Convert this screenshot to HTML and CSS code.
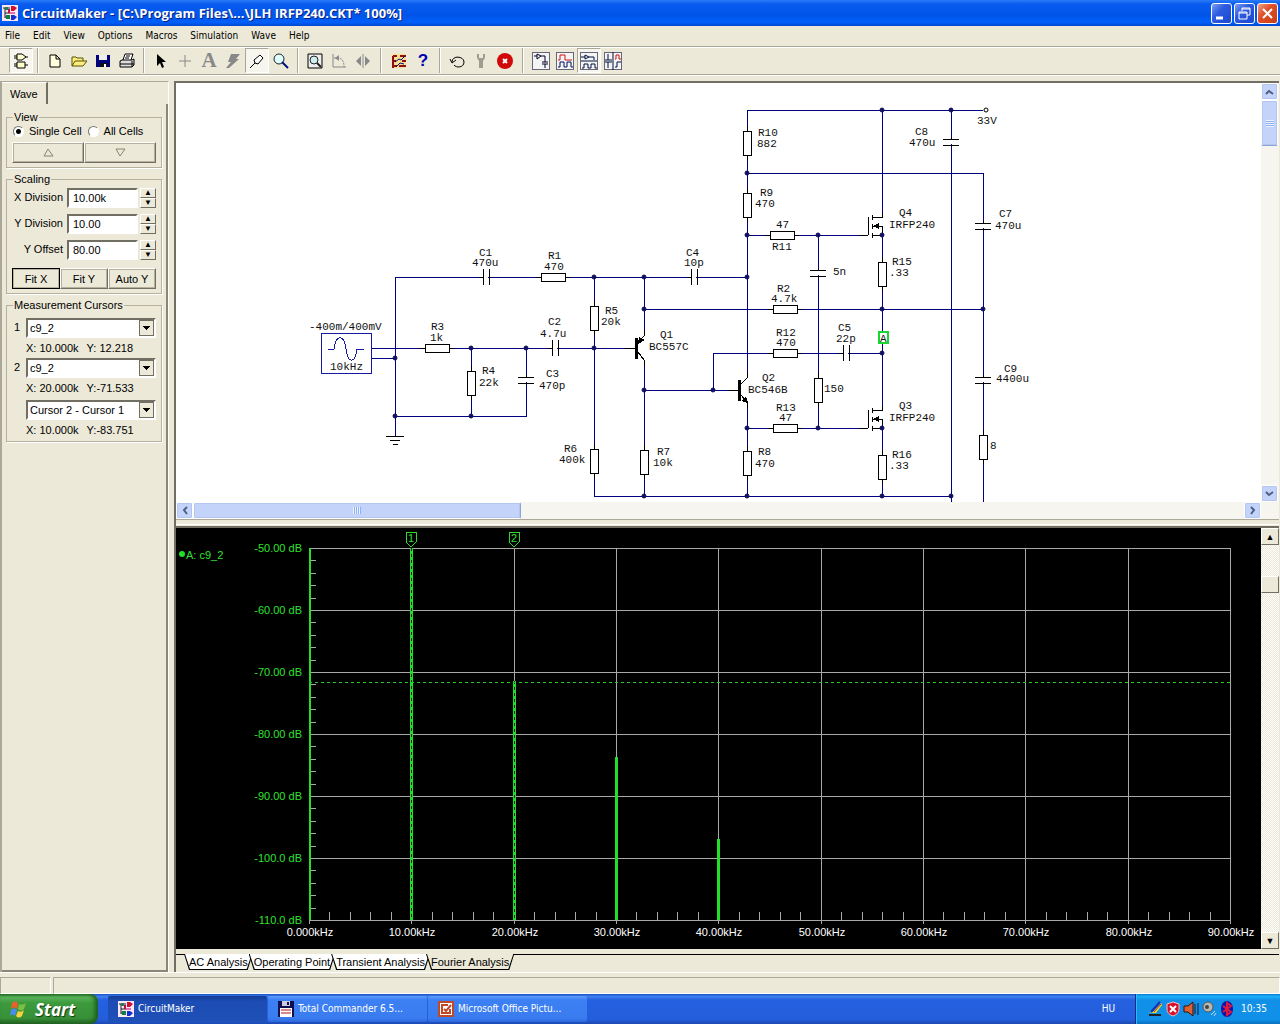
FILE: index.html
```html
<!DOCTYPE html>
<html lang="en">
<head>
    <meta charset="UTF-8">
    <meta name="viewport" content="width=device-width, initial-scale=1.0">
    <title>CircuitMaker</title>
    <link rel="stylesheet" href="styles.css">
</head>
<body>

<!-- shared symbols -->
<svg class="defs" width="0" height="0">
    <symbol id="logo" viewBox="0 0 16 16">
        <rect width="16" height="16" fill="#fbe8f4"/>
        <path d="M1 3h7M3 3v10M3 8h6M8 12H3" stroke="#223" fill="none"/>
        <path d="M3 2h3v3H3z" fill="#208050"/>
        <path d="M9 1h3l3 2-3 3H9z" fill="#d01030"/>
        <path d="M8 7h5v2H8z" fill="#e070b0"/>
        <path d="M9 10h3l3 2-3 3H9z" fill="#1030d0"/>
        <path d="M4 10h4v4H4z" fill="#108040"/>
        <path d="M6 4h2v4H6z" fill="#c01040"/>
    </symbol>
    <g id="resH"><path class="lead" d="M-17 0H17"/><rect class="part" x="-12" y="-4" width="24" height="8"/></g>
    <g id="resV"><path class="lead" d="M0 -17V17"/><rect class="part" x="-4" y="-12" width="8" height="24"/></g>
    <g id="capH"><path class="gap" d="M-2 0H2"/><path class="lead" d="M-7 0H-3M3 0H5M-3 -8V8M3 -8V8"/></g>
    <g id="capV"><path class="gap" d="M0 -2V2"/><path class="lead" d="M0 -5V-3M0 3V5M-8 -3H8M-8 3H8"/></g>
    <g id="mosfet">
        <path class="lead" d="M-22 0H-14M-14 0V-18M-10 -20V-15M-10 -11V-6M-10 -2V3M-10 -18H0V-22M-10 -9H0V0H-10"/>
        <path d="M-9 -9L-3 -12V-6z" fill="#000"/>
    </g>
</svg>

<header class="titlebar">
    <svg class="logo"><use href="#logo"/></svg>
    <h1>CircuitMaker - [C:\Program Files\...\JLH IRFP240.CKT* 100%]</h1>
    <button class="win-btn" aria-label="Minimize"><svg width="19" height="19"><path d="M4 14h7" stroke="#fff" stroke-width="3"/></svg></button>
    <button class="win-btn" aria-label="Restore"><svg width="19" height="19" fill="none" stroke="#fff"><path d="M7 7V4h8v7h-3M7 5h8"/><path d="M4 8h8v7H4zM4 9h8"/></svg></button>
    <button class="win-btn close" aria-label="Close"><svg width="19" height="19"><path d="M5 5l9 9M14 5l-9 9" stroke="#fff" stroke-width="2"/></svg></button>
</header>

<nav class="menu">
    <a href="#">File</a><a href="#">Edit</a><a href="#">View</a><a href="#">Options</a><a href="#">Macros</a><a href="#">Simulation</a><a href="#">Wave</a><a href="#">Help</a>
</nav>

<div class="toolbar">
    <button class="tool on" aria-label="Parts"><svg viewBox="0 0 16 16"><path d="M4 1h5l4 3-4 3H4zM1 3h3M1 5h3M13 4h2M4 9h8v6H4zM1 11h3M1 13h3M12 12h3" fill="#ffc" stroke="#000"/></svg></button>
    <span class="sep"></span>
    <button class="tool" aria-label="New"><svg viewBox="0 0 16 16"><path d="M3 2h6l4 4v8H3zM9 2v4h4" fill="#ffd" stroke="#000"/></svg></button>
    <button class="tool" aria-label="Open"><svg viewBox="0 0 16 16"><path d="M1 13V4h4l1 1h6v3M1 13l3-5h12l-4 5z" fill="#ffec80" stroke="#550"/></svg></button>
    <button class="tool" aria-label="Save"><svg viewBox="0 0 16 16"><path d="M1 2h14v12H1z" fill="#00007a"/><path d="M4 2h8v5H4z" fill="#eee"/><path d="M5 10h7v4H5z" fill="#111"/><path d="M9 11h2v3H9z" fill="#fff"/></svg></button>
    <button class="tool" aria-label="Print"><svg viewBox="0 0 16 16"><path d="M4 7l2-6h8l-2 6" fill="#fff" stroke="#000"/><path d="M1 8l2-1h10l2-1v6l-2 2H1z" fill="#ddd" stroke="#000"/><path d="M7 3h4M6 5h4M1 11h14M13 8v6" stroke="#000"/></svg></button>
    <span class="sep"></span>
    <button class="tool" aria-label="Select"><svg viewBox="0 0 16 16"><path d="M4 1v12l3-3 2 5 2-1-2-5h4z" fill="#000"/></svg></button>
    <button class="tool" aria-label="Wire"><svg viewBox="0 0 16 16"><path d="M8 2v12M2 8h12" stroke="#888"/></svg></button>
    <button class="tool icon-a">A</button>
    <button class="tool" aria-label="Delete"><svg viewBox="0 0 16 16"><path d="M6 1h9l-4 5h3L4 15H1l5-6H3z" fill="#888"/></svg></button>
    <button class="tool on" aria-label="Probe"><svg viewBox="0 0 16 16"><path d="M1 15l5-5M6 10L5 7l6-5 3 3-5 6z" fill="#fff" stroke="#000"/></svg></button>
    <button class="tool" aria-label="Zoom"><svg viewBox="0 0 16 16"><circle cx="6" cy="6" r="5" fill="#dff" stroke="#222"/><path d="M9 9l6 6" stroke="#001080" stroke-width="2"/></svg></button>
    <span class="sep"></span>
    <button class="tool" aria-label="Fit"><svg viewBox="0 0 16 16"><path d="M1 1h14v14H1z" fill="#eee" stroke="#000"/><circle cx="7" cy="7" r="4" fill="#cee" stroke="#222"/><path d="M10 10l4 4" stroke="#222" stroke-width="2"/></svg></button>
    <button class="tool" aria-label="Rotate"><svg viewBox="0 0 16 16"><path d="M2 1v13h13" fill="none" stroke="#888"/><path d="M3 5h4c4 0 6 3 6 9" fill="none" stroke="#888" stroke-dasharray="2 1"/><path d="M8 2v6L4 5z" fill="#888"/></svg></button>
    <button class="tool" aria-label="Mirror"><svg viewBox="0 0 16 16"><path d="M6 3v10L1 8zM10 3v10l5-5z" fill="#888"/><path d="M8 1v14" stroke="#888"/></svg></button>
    <span class="sep wide"></span>
    <button class="tool" aria-label="Analyses"><svg viewBox="0 0 16 16"><path d="M1 1h14v14H1z" fill="#f8e090"/><path d="M2 3h4M2 3v12M2 8h3M2 13h4M9 3h6M11 8h4M8 13h7" fill="none" stroke="#901010" stroke-width="2"/><path d="M4 9l4-3 2 1 4-4M5 14l4-4 4 1" fill="none" stroke="#001080"/></svg></button>
    <button class="tool icon-q">?</button>
    <span class="sep"></span>
    <button class="tool" aria-label="Reset"><svg viewBox="0 0 16 16"><path d="M3 9c0-7 12-6 12 0 0 6-8 6-10 3M1 6l2 4 4-3" fill="none" stroke="#000"/></svg></button>
    <button class="tool" aria-label="Step"><svg viewBox="0 0 16 16"><path d="M4 1v4l2 3v7h4V8l2-3V1h-2v4H6V1z" fill="#a09c90"/></svg></button>
    <button class="tool" aria-label="Stop"><svg viewBox="0 0 16 16"><circle cx="8" cy="8" r="8" fill="#d00808"/><path d="M6 6l4 4M10 6l-4 4" stroke="#fff" stroke-width="2"/></svg></button>
    <span class="sep wide"></span>
    <button class="tool scope" aria-label="Schematic"><svg viewBox="0 0 18 18"><path class="frame" d="M0 0h18v18H0z"/><path d="M2 4h3M5 2v5l4-3zM9 4h4v6M10 10h6M10 12h6M13 12v4" fill="none" stroke="#002"/></svg></button>
    <button class="tool scope" aria-label="Waveforms"><svg viewBox="0 0 18 18"><path class="frame" d="M0 0h18v18H0z"/><path d="M2 8h2V3h5v5h7" fill="none" stroke="#d01010"/><path d="M2 15h2v-5h4v5h3v-5h4v5h2" fill="none" stroke="#001060"/></svg></button>
    <button class="tool scope on" aria-label="Split horizontal"><svg viewBox="0 0 18 18"><path class="frame" d="M0 0h18v18H0z"/><path d="M1 5h4M5 3v4l4-2zM9 5h5v3M1 9h16M2 16h2v-4h4v4h3v-4h4v4h2" fill="none" stroke="#001040"/></svg></button>
    <button class="tool scope" aria-label="Split vertical"><svg viewBox="0 0 18 18"><path class="frame" d="M0 0h18v18H0z"/><path d="M9 0v18M4 2v6M1 8h7M1 10h7M4 10v6M11 15h2v-5h4" fill="none" stroke="#001040"/><path d="M11 7h1V3h3v4h2" fill="none" stroke="#d01010"/></svg></button>
</div>

<main class="work">
    <aside class="side">
        <div class="side-tab">Wave</div>
        <div class="side-page">
            <fieldset class="group view">
                <legend>View</legend>
                <div class="radios">
                    <label><input type="radio" name="cell" checked>Single Cell</label>
                    <label><input type="radio" name="cell">All Cells</label>
                </div>
                <div class="buttons">
                    <button class="btn" aria-label="Up"><svg width="11" height="9"><path d="M1 8h9L5 1z" fill="none" stroke="#888470"/></svg></button>
                    <button class="btn" aria-label="Down"><svg width="11" height="9"><path d="M1 1h9L5 8z" fill="none" stroke="#888470"/></svg></button>
                </div>
            </fieldset>

            <fieldset class="group">
                <legend>Scaling</legend>
                <div class="field">
                    <label for="xdiv">X Division</label><input type="text" id="xdiv" value="10.00k">
                    <span class="spin"><button aria-label="More">▲</button><button aria-label="Less">▼</button></span>
                </div>
                <div class="field">
                    <label for="ydiv">Y Division</label><input type="text" id="ydiv" value="10.00">
                    <span class="spin"><button aria-label="More">▲</button><button aria-label="Less">▼</button></span>
                </div>
                <div class="field">
                    <label for="yoff">Y Offset</label><input type="text" id="yoff" value="80.00">
                    <span class="spin"><button aria-label="More">▲</button><button aria-label="Less">▼</button></span>
                </div>
                <div class="buttons">
                    <button class="btn default">Fit X</button>
                    <button class="btn">Fit Y</button>
                    <button class="btn">Auto Y</button>
                </div>
            </fieldset>

            <fieldset class="group cursors">
                <legend>Measurement Cursors</legend>
                <div class="pick"><label for="cur1">1</label><select id="cur1"><option>c9_2</option></select></div>
                <p><span>X: 10.000k</span><span>Y: 12.218</span></p>
                <div class="pick"><label for="cur2">2</label><select id="cur2"><option>c9_2</option></select></div>
                <p><span>X: 20.000k</span><span>Y:-71.533</span></p>
                <div class="pick diff"><select aria-label="Difference"><option>Cursor 2 - Cursor 1</option></select></div>
                <p><span>X: 10.000k</span><span>Y:-83.751</span></p>
            </fieldset>
        </div>
    </aside>

    <section class="panes">
        <div class="schematic">
            <div class="sheet-row">
                <svg class="sheet">
                    <g transform="translate(-176 -83)">
                        <!-- wires -->
                        <path class="wire" d="M395 436V277H747M371 348H636M371 358H395M395 416H526V348M471 348V416
                            M594 277V496H951M644 277V336M644 360V496M644 309H983M644 390H739M713 390V353H882
                            M747 378V110H983M747 402V496M747 428H862M747 173H983V510M747 235H862
                            M818 235V428M882 110V214M882 235V406M882 428V496M951 110V510"/>
                        <!-- signal generator -->
                        <rect class="gen" x="321" y="333" width="50" height="40"/>
                        <path class="gen" d="M328 349H334C336 334 344 334 346 349C348 364 355 364 357 349H364"/>
                        <path class="lead" d="M386 436H404M390 440H400M393 444H398"/>
                        <!-- resistors -->
                        <use href="#resH" x="437" y="348"/><use href="#resH" x="553" y="277"/>
                        <use href="#resH" x="782" y="235"/><use href="#resH" x="785" y="309"/>
                        <use href="#resH" x="785" y="353"/><use href="#resH" x="785" y="428"/>
                        <use href="#resV" x="471" y="383"/><use href="#resV" x="594" y="318"/>
                        <use href="#resV" x="594" y="461"/><use href="#resV" x="644" y="462"/>
                        <use href="#resV" x="747" y="463"/><use href="#resV" x="747" y="143"/>
                        <use href="#resV" x="747" y="205"/><use href="#resV" x="818" y="390"/>
                        <use href="#resV" x="882" y="274"/><use href="#resV" x="882" y="467"/>
                        <use href="#resV" x="983" y="447"/>
                        <!-- capacitors -->
                        <use href="#capH" x="486" y="277"/><use href="#capH" x="555" y="348"/>
                        <use href="#capH" x="694" y="277"/><use href="#capH" x="846" y="353"/>
                        <use href="#capV" x="526" y="380"/><use href="#capV" x="818" y="273"/>
                        <use href="#capV" x="951" y="142"/><use href="#capV" x="983" y="226"/>
                        <use href="#capV" x="983" y="380"/>
                        <!-- transistors -->
                        <path class="lead" d="M625 348H636M644 330V336L638 343M638 352L644 360V366"/>
                        <rect x="635" y="338" width="3" height="21"/><path d="M638 344L639 337L645 340z"/>
                        <path class="lead" d="M728 390H739M747 372V378L741 384M741 395L747 402V408"/>
                        <rect x="738" y="380" width="3" height="21"/><path d="M748 403L741 401L746 396z"/>
                        <use href="#mosfet" x="882" y="235"/><use href="#mosfet" x="882" y="428"/>
                        <circle class="pin" cx="986" cy="110" r="2"/>
                        <g id="dots"></g>
                        <rect class="probe" x="879" y="332" width="9" height="11"/>
                        <text x="880" y="342">A</text>
                        <!-- labels -->
                        <text x="309" y="330">-400m/400mV</text><text x="330" y="370">10kHz</text>
                        <text x="479" y="256">C1</text><text x="472" y="266">470u</text>
                        <text x="548" y="259">R1</text><text x="544" y="270">470</text>
                        <text x="431" y="330">R3</text><text x="430" y="341">1k</text>
                        <text x="548" y="325">C2</text><text x="540" y="337">4.7u</text>
                        <text x="482" y="374">R4</text><text x="479" y="386">22k</text>
                        <text x="546" y="377">C3</text><text x="539" y="389">470p</text>
                        <text x="605" y="314">R5</text><text x="601" y="325">20k</text>
                        <text x="564" y="452">R6</text><text x="559" y="463">400k</text>
                        <text x="657" y="455">R7</text><text x="653" y="466">10k</text>
                        <text x="660" y="338">Q1</text><text x="649" y="350">BC557C</text>
                        <text x="686" y="256">C4</text><text x="684" y="266">10p</text>
                        <text x="758" y="136">R10</text><text x="757" y="147">882</text>
                        <text x="760" y="196">R9</text><text x="755" y="207">470</text>
                        <text x="776" y="228">47</text><text x="772" y="250">R11</text>
                        <text x="777" y="292">R2</text><text x="771" y="302">4.7k</text>
                        <text x="776" y="336">R12</text><text x="776" y="346">470</text>
                        <text x="838" y="331">C5</text><text x="836" y="342">22p</text>
                        <text x="762" y="381">Q2</text><text x="748" y="393">BC546B</text>
                        <text x="776" y="411">R13</text><text x="779" y="421">47</text>
                        <text x="758" y="455">R8</text><text x="755" y="467">470</text>
                        <text x="824" y="392">150</text><text x="833" y="275">5n</text>
                        <text x="899" y="216">Q4</text><text x="889" y="228">IRFP240</text>
                        <text x="892" y="265">R15</text><text x="889" y="276">.33</text>
                        <text x="899" y="409">Q3</text><text x="889" y="421">IRFP240</text>
                        <text x="892" y="458">R16</text><text x="889" y="469">.33</text>
                        <text x="915" y="135">C8</text><text x="909" y="146">470u</text>
                        <text x="977" y="124">33V</text><text x="990" y="449">8</text>
                        <text x="999" y="217">C7</text><text x="995" y="229">470u</text>
                        <text x="1004" y="372">C9</text><text x="996" y="382">4400u</text>
                    </g>
                </svg>
                <div class="xp-scroll vert">
                    <button aria-label="Scroll up"><svg width="9" height="6"><path d="M1 5l3-3 4 3" fill="none" stroke="#4d6185" stroke-width="2"/></svg></button>
                    <span class="thumb"></span>
                    <span class="rest"></span>
                    <button aria-label="Scroll down"><svg width="9" height="6"><path d="M1 1l3 3 4-3" fill="none" stroke="#4d6185" stroke-width="2"/></svg></button>
                </div>
            </div>
            <div class="xp-scroll horiz">
                <button aria-label="Scroll left"><svg width="6" height="9"><path d="M5 1L2 4l3 4" fill="none" stroke="#4d6185" stroke-width="2"/></svg></button>
                <span class="thumb"></span>
                <span class="rest"></span>
                <button aria-label="Scroll right"><svg width="6" height="9"><path d="M1 1l3 3-3 4" fill="none" stroke="#4d6185" stroke-width="2"/></svg></button>
            </div>
        </div>
        <div class="splitter"></div>
        <div class="plot-row">
            <svg class="plot" id="plot"></svg>
            <div class="old-scroll">
                <button aria-label="Scroll up">▲</button>
                <span class="thumb"></span>
                <button aria-label="Scroll down">▼</button>
            </div>
        </div>
        <div class="sheets">
            <button class="sheet-tab">AC Analysis</button>
            <button class="sheet-tab">Operating Point</button>
            <button class="sheet-tab">Transient Analysis</button>
            <button class="sheet-tab active">Fourier Analysis</button>
        </div>
    </section>
</main>

<footer class="status"><span class="cell"></span><span class="cell"></span></footer>

<div class="taskbar">
    <button class="start">
        <svg width="20" height="20" viewBox="0 0 20 20"><path d="M3 4c2-2 4-2 6 0L8 10c-2-2-4-2-6 0z" fill="#e8602c"/><path d="M10 5c2 1 4 1 7-1l-2 6c-2 2-4 2-6 0z" fill="#7cc043"/><path d="M2 11c2-2 4-2 6 0l-2 6c-2-2-4-2-5 0z" fill="#4a8cf0"/><path d="M9 12c2 1 4 1 6-1l-2 6c-2 2-4 2-6 0z" fill="#fbd03c"/></svg>
        Start
    </button>
    <button class="task current"><svg class="logo"><use href="#logo"/></svg>CircuitMaker</button>
    <button class="task"><svg class="logo" viewBox="0 0 16 16"><path d="M0 0h16v16H0z" fill="#101050"/><path d="M4 0h8v5H4z" fill="#ccd"/><path d="M9 1h2v3H9z" fill="#101050"/><path d="M2 7h12v9H2z" fill="#fff"/><path d="M3 9h10M3 12h10" stroke="#c01010"/></svg>Total Commander 6.5...</button>
    <button class="task"><svg class="logo" viewBox="0 0 16 16"><path d="M1 1h14v14H1z" fill="#fff" stroke="#c04a28" stroke-width="2"/><path d="M10 4H4v8h8V8M6 8l2 2 5-6" fill="none" stroke="#c04a28" stroke-width="2"/></svg>Microsoft Office Pictu...</button>
    <span class="lang">HU</span>
    <div class="tray">
        <svg viewBox="0 0 16 16"><path d="M1 12l5-1 8-9 1 2-6 8z" fill="#e8e020"/><path d="M4 11l9-10" stroke="#1030c0" stroke-width="2"/><path d="M7 11l7-8" stroke="#d02020"/><path d="M2 14h12" stroke="#222" stroke-width="2"/></svg>
        <svg viewBox="0 0 16 16"><path d="M8 1l6 2v5c0 4-3 6-6 7-3-1-6-3-6-7V3z" fill="#d8102c" stroke="#f0c0c0"/><path d="M5 5l6 6M11 5l-6 6" stroke="#fff" stroke-width="2"/></svg>
        <svg viewBox="0 0 16 16"><path d="M1 5h4l5-4v14l-5-4H1z" fill="#e06030" stroke="#301008"/><path d="M12 3v10M15 2v12" stroke="#181830"/></svg>
        <svg viewBox="0 0 16 16"><circle cx="7" cy="6" r="5" fill="#b8b8b0" stroke="#555"/><circle cx="6" cy="6" r="2" fill="#444"/><path d="M10 14l4-4M13 15l2-3" stroke="#cde"/></svg>
        <svg viewBox="0 0 16 16"><ellipse cx="8" cy="8" rx="6" ry="8" fill="#1414a0"/><path d="M4 5l8 6-4 3V2l4 3-8 6" fill="none" stroke="#e01840" stroke-width="2"/></svg>
        <time>10:35</time>
    </div>
</div>

<script>
// wire junctions
const dots = [[395,358],[395,416],[471,348],[471,416],[526,348],[594,277],[594,348],[644,277],[747,277],
    [644,309],[644,390],[713,390],[747,173],[747,235],[818,235],[818,428],[747,428],[882,110],[951,110],
    [882,235],[882,309],[983,309],[882,353],[882,428],[644,496],[747,496],[882,496],[951,496]];
document.getElementById('dots').innerHTML = dots.map(d => `<circle cx="${d[0]}" cy="${d[1]}" r="2"/>`).join('');

// Fourier plot
const left = 133, top0 = 20, width = 921, height = 372;
const xAt = khz => Math.round(left + khz * width / 90);
const yAt = db => Math.round(top0 + (-50 - db) * height / 60);
const bottom = top0 + height;
let out = '';

// ticks and grid
for (let k = 0; k <= 90; k += 2) {
    out += `<path class="grid" d="M${xAt(k)} ${bottom - 8}V${bottom}"/>`;
}
for (let db = -50; db >= -110; db -= 2) {
    out += `<path class="grid" d="M${left} ${yAt(db)}h7"/>`;
}
for (let k = 0; k <= 90; k += 10) {
    out += `<path class="grid" d="M${xAt(k)} ${top0}V${bottom + 4}"/>`;
    out += `<text class="xlab" x="${xAt(k) + 1}" y="${bottom + 16}">${k ? k.toFixed(2) : '0.000'}kHz</text>`;
}
for (let db = -50; db >= -110; db -= 10) {
    out += `<path class="grid" d="M${left} ${yAt(db)}H${left + width}"/>`;
    out += `<text class="ylab" x="${left - 7}" y="${yAt(db) + 4}">${db.toFixed(db > -100 ? 2 : 1)} dB</text>`;
}

// harmonics
out += `<rect class="bar" x="${left}" y="${top0}" width="2" height="${height}"/>`;
[[10, -50], [20, -71.5], [30, -83.7], [40, -97]].forEach(h => {
    const x = xAt(h[0]), y = yAt(h[1]);
    out += `<rect class="bar" x="${x - 1}" y="${y}" width="3" height="${bottom - y}"/>`;
    if (h[0] <= 20) {
        out += `<path class="dash" d="M${x} ${y}V${bottom}"/>`;
    }
});

// measurement cursors
out += `<path class="level" d="M${left} ${yAt(-71.6)}H${left + width}"/>`;
[10, 20].forEach((k, i) => {
    const x = xAt(k);
    out += `<path class="flag" d="M${x - 5} 4h10v10l-5 5l-5 -5z"/><text class="num" x="${x}" y="14">${i + 1}</text>`;
});
out += `<circle class="mark" cx="6" cy="26" r="3"/><text x="10" y="31">A: c9_2</text>`;
document.getElementById('plot').innerHTML = out;
</script>

</body>
</html>
```

FILE: styles.css
```css
* {
    box-sizing: border-box;
}

body {
    margin: 0;
    height: 100vh;
    display: flex;
    flex-direction: column;
    overflow: hidden;
    background-color: #ece9d8;
    color: #000;
    font-family: "Liberation Sans", Arial, sans-serif;
    font-size: 11px;
    line-height: 14px;
}

button, input, select {
    font: inherit;
    color: inherit;
    padding: 0;
    margin: 0;
}

.defs {
    position: absolute;
}

.logo {
    width: 16px;
    height: 16px;
    flex: none;
}

/* title bar */
.titlebar {
    display: flex;
    align-items: center;
    gap: 2px;
    height: 26px;
    padding: 0 2px;
    background: linear-gradient(#2a7cf8, #0a5cf0 15%, #0054e8 60%, #0060fc 85%, #0048d0);
}

.titlebar h1 {
    flex: 1;
    margin: 0;
    padding-left: 2px;
    color: #fff;
    font-family: "Open Sans", sans-serif;
    font-size: 13px;
    font-weight: 700;
    text-shadow: 1px 1px #0a1f80;
    white-space: nowrap;
}

.win-btn {
    display: flex;
    width: 21px;
    height: 21px;
    border: 1px solid #fff;
    border-radius: 3px;
    background: linear-gradient(135deg, #7d9df4, #2c5ae0 40%, #1c48d0);
}

.win-btn.close {
    background: linear-gradient(135deg, #f0a088, #e05028 40%, #c83c14);
}

/* menu */
.menu {
    display: flex;
    gap: 13px;
    height: 20px;
    padding-left: 5px;
    align-items: center;
    font-family: "DejaVu Sans Condensed", "DejaVu Sans", sans-serif;
    font-size: 10px;
}

.menu a {
    color: #000;
    text-decoration: none;
}

/* toolbar */
.toolbar {
    display: flex;
    align-items: center;
    height: 29px;
    padding-left: 9px;
    border-top: 1px solid #aca899;
    border-bottom: 1px solid #aca899;
    box-shadow: inset 0 1px #fff, 0 1px #fff;
}

.tool {
    display: flex;
    align-items: center;
    justify-content: center;
    width: 24px;
    height: 25px;
    border: 1px solid transparent;
    background: none;
}

.tool.on {
    border-color: #aca899 #fff #fff #aca899;
    background-color: #f6f5ee;
}

.tool svg {
    width: 16px;
    height: 16px;
    flex: none;
}

.tool.scope svg {
    width: 18px;
    height: 18px;
}

.frame {
    fill: #f4f4f4;
    stroke: #667;
    stroke-width: 2;
}

.icon-a {
    font: bold 21px "Liberation Serif", serif;
    color: #888;
}

.icon-q {
    font: bold 17px "Liberation Sans", sans-serif;
    color: #0000b0;
}

.sep {
    width: 2px;
    height: 25px;
    margin: 0 4px;
    border-left: 1px solid #aca899;
    border-right: 1px solid #fff;
}

.sep.wide {
    margin: 0 5px;
}

/* work area */
.work {
    flex: 1;
    display: flex;
    min-height: 0;
    margin-top: 6px;
}

.side {
    flex: none;
    display: flex;
    flex-direction: column;
    width: 169px;
    margin-right: 5px;
    border-top: 1px solid #aca899;
    border-left: 2px solid #aca899;
    border-right: 1px solid #fff;
}

.side-tab {
    width: 46px;
    height: 22px;
    padding: 4px 0 0 8px;
    border-top: 1px solid #fff;
    border-right: 2px solid #716f64;
}

.side-page {
    flex: 1;
    padding: 6px 4px 0;
    border-right: 2px solid #8a8775;
    border-bottom: 2px solid #8a8775;
}

.group {
    min-width: 0;
    margin: 0 0 4px;
    padding: 0 5px 4px;
    border: 1px solid #b5b19c;
    box-shadow: 1px 1px #fff;
}

.group legend {
    margin-left: 1px;
    padding: 0 1px;
}

.group.cursors {
    padding-top: 6px;
}

.radios {
    display: flex;
    gap: 6px;
    padding: 0 0 4px 1px;
}

.radios label {
    display: flex;
    align-items: center;
    gap: 5px;
    white-space: nowrap;
}

.radios input {
    appearance: none;
    width: 11px;
    height: 11px;
    border: 1px solid #777;
    border-color: #777 #fff #fff #777;
    border-radius: 50%;
    background: #fff;
}

.radios input:checked {
    background: radial-gradient(#000 2px, #fff 3px);
}

.buttons {
    display: flex;
}

.btn {
    flex: 1;
    height: 21px;
    border: 1px solid;
    border-color: #fff #716f64 #716f64 #fff;
    box-shadow: 0 0 0 1px #b5b19c inset;
    background-color: #ece9d8;
}

.btn.default {
    border-color: #000;
}

.field {
    display: flex;
    align-items: center;
    margin: 2px 0 6px;
}

.field label {
    width: 51px;
    padding-bottom: 3px;
    text-align: right;
    white-space: nowrap;
}

.field input {
    width: 71px;
    height: 20px;
    margin: 0 2px 0 4px;
    padding-left: 4px;
    border: 2px solid;
    border-color: #716f64 #fff #fff #716f64;
    background-color: #fff;
}

.field + .buttons {
    margin-top: 8px;
}

.spin {
    display: flex;
    flex-direction: column;
    width: 16px;
}

.spin button {
    height: 10px;
    border: 1px solid;
    border-color: #fff #716f64 #716f64 #fff;
    background-color: #ece9d8;
    font-size: 8px;
    line-height: 8px;
}

.pick {
    display: flex;
    justify-content: flex-end;
}

.pick.diff {
    padding-top: 2px;
}

.pick label {
    flex: 1;
    padding: 2px 0 0 2px;
}

.pick select {
    appearance: none;
    width: 130px;
    height: 20px;
    padding-left: 2px;
    border: 2px solid;
    border-color: #716f64 #fff #fff #716f64;
    border-radius: 0;
    background:
        linear-gradient(#000, #000) right 7px top 9px / 1px 1px no-repeat,
        linear-gradient(#000, #000) right 6px top 8px / 3px 1px no-repeat,
        linear-gradient(#000, #000) right 5px top 7px / 5px 1px no-repeat,
        linear-gradient(#000, #000) right 4px top 6px / 7px 1px no-repeat,
        linear-gradient(#ece9d8, #ece9d8) right 1px top 1px / 13px 14px no-repeat,
        linear-gradient(#716f64, #716f64) right / 15px 16px no-repeat,
        #fff;
}

.cursors p {
    display: flex;
    gap: 8px;
    margin: 3px 0;
    padding-left: 14px;
    white-space: nowrap;
}

.cursors p:last-child {
    margin-bottom: 0;
}

/* panes */
.panes {
    flex: 1;
    display: flex;
    flex-direction: column;
    min-width: 0;
    margin-right: 1px;
    border-left: 2px solid #716f64;
}

.schematic {
    flex: none;
    height: 438px;
    display: flex;
    flex-direction: column;
    border-top: 2px solid #716f64;
}

.sheet-row {
    flex: 1;
    display: flex;
    min-height: 0;
}

.sheet {
    flex: 1;
    height: 100%;
    background-color: #fff;
    overflow: hidden;
    shape-rendering: crispEdges;
}

.sheet text {
    font: 11px "Liberation Mono", monospace;
    fill: #111;
}

.wire, .gen {
    fill: none;
    stroke: #000080;
}

.gen {
    stroke: #1818a0;
}

.lead {
    fill: none;
    stroke: #000;
}

.part {
    fill: #fff;
    stroke: #000;
}

.gap {
    stroke: #fff;
    stroke-width: 3;
}

.pin {
    fill: #fff;
    stroke: #000;
    shape-rendering: auto;
}

.probe {
    fill: #fff;
    stroke: #18d830;
    stroke-width: 2;
}

#dots {
    fill: #101060;
    stroke: #101060;
    shape-rendering: auto;
}

.xp-scroll {
    display: flex;
    background-color: #f6f5f0;
}

.xp-scroll.vert {
    flex-direction: column;
    width: 18px;
}

.xp-scroll.horiz {
    height: 17px;
    padding-right: 18px;
}

.xp-scroll button, .xp-scroll .thumb {
    display: flex;
    align-items: center;
    justify-content: center;
    border: 1px solid #fff;
    border-radius: 2px;
    background-color: #c4d3fa;
    box-shadow: inset 0 0 0 1px #b4c6f0;
}

.xp-scroll button {
    width: 17px;
    height: 17px;
}

.xp-scroll .rest {
    flex: 1;
}

.xp-scroll .thumb::after {
    content: "";
    width: 8px;
    height: 7px;
}

.vert .thumb {
    width: 17px;
    height: 46px;
    border-bottom-color: #8aa4dc;
}

.horiz .thumb {
    width: 328px;
    border-right-color: #8aa4dc;
}

.vert .thumb::after {
    background: repeating-linear-gradient(#eef4ff 0 1px, #8cb0f8 1px 2px);
}

.horiz .thumb::after {
    background: repeating-linear-gradient(90deg, #eef4ff 0 1px, #8cb0f8 1px 2px);
}

.splitter {
    height: 9px;
    border-top: 1px solid #aca899;
    border-bottom: 2px solid #716f64;
    background: linear-gradient(#fff, #fff) 0 4px / 100% 1px no-repeat;
}

.plot-row {
    flex: 1;
    display: flex;
    min-height: 0;
}

.plot {
    flex: 1;
    height: 100%;
    background-color: #000;
    shape-rendering: crispEdges;
}

.grid {
    fill: none;
    stroke: #a8a8a8;
}

.bar {
    fill: #20e028;
}

.level {
    stroke: #20c828;
    stroke-dasharray: 3 3;
}

.dash {
    stroke: #222;
    stroke-dasharray: 3 3;
}

.flag {
    fill: #000;
    stroke: #30d830;
}

.mark {
    fill: #20e028;
    shape-rendering: auto;
}

.plot text {
    fill: #30e030;
}

.plot .xlab {
    fill: #fff;
    text-anchor: middle;
}

.plot .ylab {
    text-anchor: end;
}

.plot .num {
    text-anchor: middle;
}

.old-scroll {
    display: flex;
    flex-direction: column;
    width: 18px;
    background: repeating-conic-gradient(#fff 0 25%, #ece9d8 0 50%) 0 0 / 2px 2px;
}

.old-scroll button, .old-scroll .thumb {
    height: 17px;
    border: 1px solid;
    border-color: #fff #716f64 #716f64 #fff;
    background-color: #ece9d8;
    font-size: 9px;
    line-height: 14px;
}

.old-scroll .thumb {
    margin: 31px 0 auto;
}

/* sheet tabs */
.sheets {
    display: flex;
    height: 23px;
    padding: 0 0 2px 8px;
    background: linear-gradient(#000, #000) 0 5px / 100% 1px no-repeat;
    align-items: flex-end;
}

.sheet-tab {
    height: 16px;
    margin-right: -4px;
    padding: 0 5px;
    border: 0;
    background: #000;
    clip-path: polygon(0 0, 100% 0, calc(100% - 5px) 100%, 5px 100%);
    position: relative;
    z-index: 0;
    white-space: nowrap;
}

.sheet-tab::before {
    content: "";
    position: absolute;
    z-index: -1;
    inset: 0 1px 1px;
    background-color: #fff;
    clip-path: polygon(0 0, 100% 0, calc(100% - 5px) 100%, 5px 100%);
}

.sheet-tab.active {
    height: 16px;
}

.sheet-tab.active::before {
    background-color: #ece9d8;
}

/* status bar */
.status {
    display: flex;
    gap: 2px;
    height: 22px;
    padding-top: 4px;
    border-top: 1px solid #fff;
}

.status .cell {
    width: 51px;
    border: 1px solid;
    border-color: #aca899 #fff #fff #aca899;
}

.status .cell:last-child {
    flex: 1;
}

/* taskbar */
.taskbar {
    display: flex;
    height: 30px;
    color: #fff;
    background: linear-gradient(#1c50c0, #3c80f0 8%, #2460e0 20%, #245edb 85%, #1c48b0);
    font-family: "DejaVu Sans Condensed", "DejaVu Sans", sans-serif;
    font-size: 10px;
}

.start {
    display: flex;
    align-items: center;
    gap: 6px;
    width: 98px;
    margin-right: 10px;
    padding-left: 9px;
    border: 0;
    border-radius: 0 8px 8px 0;
    background: linear-gradient(#2a7a2a, #5cb45c 10%, #3c9a3c 30%, #389038 80%, #246424);
    box-shadow: inset -3px 0 4px #1c5c1c;
    color: #fff;
    font: italic bold 17px "Open Sans", sans-serif;
    text-shadow: 1px 1px 1px #143814;
}

.task {
    display: flex;
    align-items: center;
    gap: 4px;
    width: 159px;
    height: 26px;
    margin: 2px 1px 0 0;
    padding-left: 10px;
    border: 0;
    border-radius: 2px;
    background: linear-gradient(#5c9cfc, #3c80f4 15%, #3a7cf0 85%, #2c68dc);
    white-space: nowrap;
}

.task.current {
    background: linear-gradient(#143c94, #1c4cb4 20%, #1e50b8);
}

.lang {
    margin-left: auto;
    padding: 8px 20px 0 0;
}

.tray {
    display: flex;
    align-items: center;
    gap: 2px;
    padding: 0 13px 0 11px;
    border-left: 1px solid #0c2c80;
    background: linear-gradient(#0c78d0, #18b0f8 8%, #1290e8 20%, #1090e8 85%, #0c70c0);
    box-shadow: inset 1px 0 #30b8f8;
}

.tray svg {
    width: 16px;
    height: 16px;
}

.tray time {
    margin-left: 4px;
}
```
